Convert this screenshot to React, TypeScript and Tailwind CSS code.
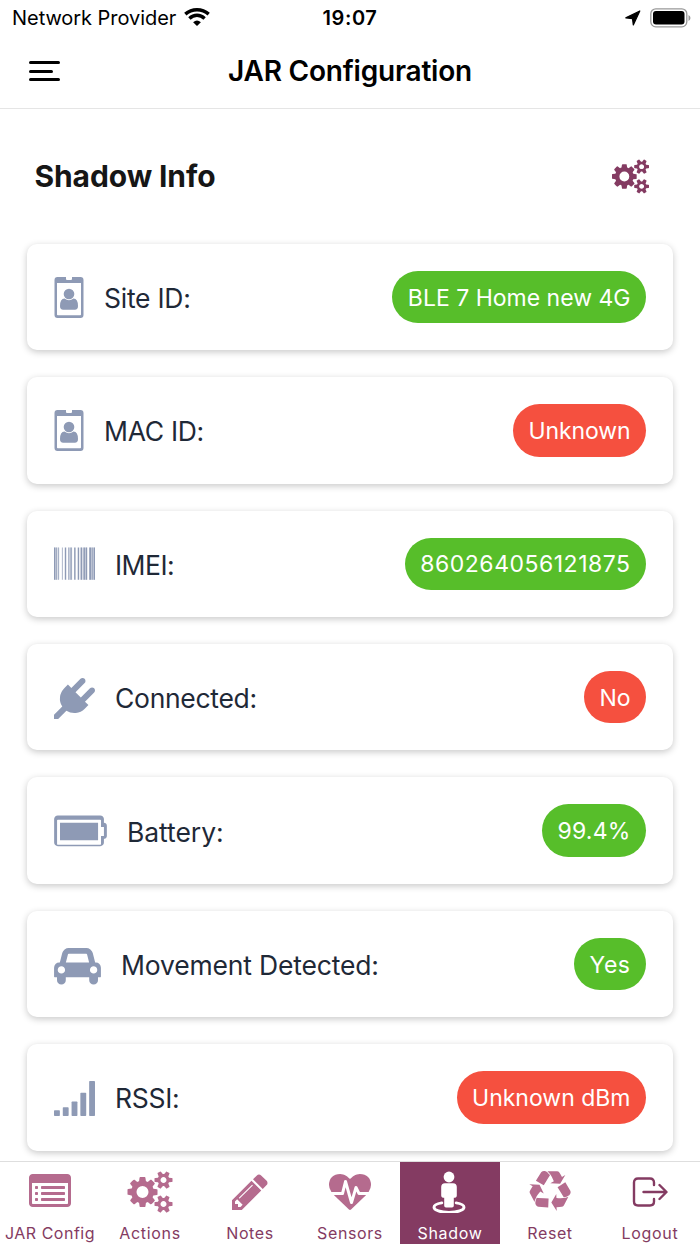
import React from "react";

interface IconProps {
  className?: string;
}

interface ShadowItem {
  label: string;
  value: string;
  ok: boolean;
  icon: React.ReactNode;
  labelClass: string;
  valueClass: string;
}

interface TabItem {
  label: string;
  icon: React.ReactNode;
  active?: boolean;
  labelClass: string;
}

const CogsIcon: React.FC<IconProps> = ({ className }) => (
  <svg className={className} viewBox="0 0 1920 1792" fill="currentColor">
    <path d="M896 896q0-106-75-181t-181-75-181 75-75 181 75 181 181 75 181-75 75-181zm768 512q0-52-38-90t-90-38-90 38-38 90q0 53 37.500 90.500t90.500 37.500 90.500-37.500 37.500-90.500zm0-1024q0-52-38-90t-90-38-90 38-38 90q0 53 37.500 90.500t90.500 37.500 90.500-37.500 37.500-90.500zm-384 421v185q0 10-7 19.500t-16 10.500l-155 24q-11 35-32 76 34 48 90 115 7 11 7 20 0 12-7 19-23 30-82.500 89.500t-78.500 59.500q-11 0-21-7l-115-90q-37 19-77 31-11 108-23 155-7 24-30 24h-186q-11 0-20-7.500t-10-17.500l-23-153q-34-10-75-31l-118 89q-7 7-20 7-11 0-21-8-144-133-144-160 0-9 7-19 10-14 41-53t47-61q-23-44-35-82l-152-24q-10-1-17-9.500t-7-19.500v-185q0-10 7-19.500t16-10.500l155-24q11-35 32-76-34-48-90-115-7-11-7-20 0-12 7-20 22-30 82-89t79-59q11 0 21 7l115 90q34-18 77-32 11-108 23-154 7-24 30-24h186q11 0 20 7.500t10 17.500l23 153q34 10 75 31l118-89q8-7 20-7 11 0 21 8 144 133 144 160 0 8-7 19-12 16-42 54t-45 60q23 48 34 82l152 23q10 2 17 10.500t7 19.500zm640 533v140q0 16-149 31-12 27-30 52 51 113 51 138 0 4-4 7-122 71-124 71-8 0-46-47t-52-68q-20 2-30 2t-30-2q-14 21-52 68t-46 47q-2 0-124-71-4-3-4-7 0-25 51-138-18-25-30-52-149-15-149-31v-140q0-16 149-31 13-29 30-52-51-113-51-138 0-4 4-7 4-2 35-20t59-34 30-16q8 0 46 46.500t52 67.500q20-2 30-2t30 2q51-71 92-112l6-2q4 0 124 70 4 3 4 7 0 25-51 138 17 23 30 52 149 15 149 31zm0-1024v140q0 16-149 31-12 27-30 52 51 113 51 138 0 4-4 7-122 71-124 71-8 0-46-47t-52-68q-20 2-30 2t-30-2q-14 21-52 68t-46 47q-2 0-124-71-4-3-4-7 0-25 51-138-18-25-30-52-149-15-149-31v-140q0-16 149-31 13-29 30-52-51-113-51-138 0-4 4-7 4-2 35-20t59-34 30-16q8 0 46 46.500t52 67.500q20-2 30-2t30 2q51-71 92-112l6-2q4 0 124 70 4 3 4 7 0 25-51 138 17 23 30 52 149 15 149 31z" />
  </svg>
);

const BadgeIcon: React.FC = () => (
  <svg className="h-[42px] w-[30px]" viewBox="0 0 30 42" fill="currentColor">
    <path
      fillRule="evenodd"
      d="M3.500 0H12v2q0 1 1 1h4q1 0 1-1V0h8.500q3 0 3 3v35q0 3-3 3h-23q-3 0-3-3V3q0-3 3-3zM3 6v31.500q0 .8.800.8h22.400q.8 0 .8-.8V6z"
    />
    <circle cx="15" cy="17" r="5.300" />
    <path d="M10.500 21.500q4.500 3.500 9 0 4.500.3 4.500 7.500 0 3.800-3.200 3.800h-11.600q-3.200 0-3.200-3.800 0-7.200 4.500-7.500z" />
  </svg>
);

const BarcodeIcon: React.FC = () => (
  <svg className="h-[41px] w-[41px]" viewBox="0 40 1792 1792" fill="currentColor">
    <path d="M0 192h63v1408H0zM94 192h32v1408H94zM189 192h31v1408h-31zM346 192h31v1408h-31zM472 192h62v1408h-62zM629 192h31v1408h-31zM692 192h31v1408h-31zM755 192h31v1408h-31zM880 192h63v1408h-63zM1037 192h63v1408h-63zM1163 192h63v1408h-63zM1289 192h63v1408h-63zM1383 192h63v1408h-63zM1541 192h94v1408h-94zM1666 192h32v1408h-32zM1729 192h63v1408h-63z" />
    <path
      opacity="0.300"
      d="M0 192h230v1408H0zM620 192h176v1408H620zM1163 192h300v1408h-300zM1541 192h251v1408h-251z"
    />
  </svg>
);

const PlugIcon: React.FC = () => (
  <svg className="h-[41px] w-[41px]" viewBox="0 0 1792 1792" fill="currentColor">
    <path d="M1755 453q37 38 37 90.500t-37 90.500l-401 400 150 150-160 160q-163 163-389.500 186.500t-411.500-100.500l-362 362h-181v-181l362-362q-124-185-100.500-411.500t186.500-389.500l160-160 150 150 400-401q38-37 91-37t90 37 37 90.500-37 90.500l-400 401 234 234 401-400q38-37 91-37t90 37z" />
  </svg>
);

const BatteryIcon: React.FC = () => (
  <svg className="h-[41px] w-[53px]" viewBox="0 0 2304 1792" fill="currentColor">
    <path d="M1920 512v768h-1664v-768h1664zm128 576h128v-384h-128v-288q0-14-9-23t-23-9h-1856q-14 0-23 9t-9 23v1024q0 14 9 23t23 9h1856q14 0 23-9t9-23v-288zm256-384v384q0 53-37.500 90.500t-90.500 37.500v160q0 66-47 113t-113 47h-1856q-66 0-113-47t-47-113v-1024q0-66 47-113t113-47h1856q66 0 113 47t47 113v160q53 0 90.500 37.500t37.500 90.500z" />
  </svg>
);

const CarIcon: React.FC = () => (
  <svg className="h-[41px] w-[47px]" viewBox="0 0 2048 1792" fill="currentColor">
    <path d="M480 1088q0-66-47-113t-113-47-113 47-47 113 47 113 113 47 113-47 47-113zm36-320h1016l-89-357q-2-8-14-17.500t-21-9.500h-768q-9 0-21 9.500t-14 17.500zm1372 320q0-66-47-113t-113-47-113 47-47 113 47 113 113 47 113-47 47-113zm160-96v384q0 14-9 23t-23 9h-96v128q0 80-56 136t-136 56-136-56-56-136v-128h-1024v128q0 80-56 136t-136 56-136-56-56-136v-128h-96q-14 0-23-9t-9-23v-384q0-93 65.500-158.500t158.500-65.500h28l105-419q23-94 104-157.500t179-63.500h768q98 0 179 63.500t104 157.500l105 419h28q93 0 158.500 65.500t65.500 158.500z" />
  </svg>
);

const SignalIcon: React.FC = () => (
  <svg className="h-[41px] w-[41px]" viewBox="0 0 1792 1792" fill="currentColor">
    <rect x="0" y="1408" width="256" height="256" rx="32" />
    <rect x="384" y="1280" width="256" height="384" rx="32" />
    <rect x="768" y="1024" width="256" height="640" rx="32" />
    <rect x="1152" y="640" width="256" height="1024" rx="32" />
    <rect x="1536" y="128" width="256" height="1536" rx="32" />
  </svg>
);

const ListIcon: React.FC = () => (
  <svg className="h-[42px] w-[42px]" viewBox="0 0 1792 1792" fill="currentColor">
    <path
      fillRule="evenodd"
      d="M160 128h1472q66 0 113 47t47 113v1088q0 66-47 113t-113 47H160q-66 0-113-47T0 1376V288q0-66 47-113t113-47zM128 512v864q0 32 32 32h1472q32 0 32-32V512z"
    />
    {[640, 896, 1152].map((y) => (
      <g key={y}>
        <rect x="256" y={y} width="128" height="128" rx="32" />
        <rect x="512" y={y} width="1024" height="128" rx="32" />
      </g>
    ))}
  </svg>
);

const PencilIcon: React.FC = () => (
  <svg className="h-[42px] w-[42px]" viewBox="0 0 1792 1792" fill="currentColor">
    <path d="M491 1536l91-91-235-235-91 91v107h128v128h107zm523-928q0-22-22-22-10 0-17 7l-542 542q-7 7-7 17 0 22 22 22 10 0 17-7l542-542q7-7 7-17zm-54-192l416 416-832 832h-416v-416zm683 96q0 53-37 90l-166 166-416-416 166-165q36-38 90-38 53 0 91 38l235 234q37 39 37 91z" />
  </svg>
);

const HeartbeatIcon: React.FC = () => (
  <svg className="h-[42px] w-[42px]" viewBox="0 0 1792 1792" fill="currentColor">
    <path d="M1280 1024h305q-5 6-10 10.500t-9 7.500l-3 4-623 600q-18 18-44 18t-44-18l-624-602q-5-2-21-20h369q22 0 39.500-13.500t22.500-34.500l70-281 190 667q6 20 23 33t39 13q21 0 38-13t23-33l146-485 56 112q18 35 57 35zm512-428q0 145-103 300h-369l-111-221q-8-17-25.500-27t-36.500-8q-45 5-56 46l-129 430-196-686q-6-20-23.500-33t-39.500-13-39 13.500-22 34.500l-116 464h-423q-103-155-103-300 0-220 127-344t351-124q62 0 126.500 21.500t120 58 95.500 68.500 76 68q36-36 76-68t95.500-68.500 120-58 126.500-21.500q224 0 351 124t127 344z" />
  </svg>
);

const StreetViewIcon: React.FC = () => (
  <svg className="mr-[3px] h-[42px] w-[34px]" viewBox="0 0 34 42" fill="currentColor">
    <circle cx="17" cy="6" r="5.400" />
    <path d="M13 12.200h8q3.800 0 3.800 3.800v8.500q0 2.300-3 2.300v8q0 1.800-1.800 1.800h-6q-1.800 0-1.800-1.800v-8q-3 0-3-2.300V16q0-3.800 3.800-3.800z" />
    <path
      d="M9.800 31.900C5 32.700 2 34.200 2 36.200c0 3 6.800 5.200 15 5.200s15-2.200 15-5.200c0-2-3-3.500-7.800-4.300"
      fill="none"
      stroke="currentColor"
      strokeWidth="2.900"
      strokeLinecap="round"
    />
  </svg>
);

const RecycleIcon: React.FC = () => (
  <svg className="h-[42px] w-[42px]" viewBox="0 0 1792 1792" fill="currentColor">
    <path d="M836 1169l-15 368-2 22-420-29q-36-3-67-31.500t-47-65.500q-11-27-14.500-55t4-65 12-55 21.500-64 19-53q78 12 509 28zm-387-586l180 379-147-92q-63 72-111.500 144.500t-72.500 125-39.500 94.500-18.500 63l-4 21-190-357q-17-26-18-56t6-47l8-18q35-63 114-188l-140-86zm1231 517l-188 359q-12 29-36.500 46.500t-43.500 20.500l-18 4q-71 7-219 12l8 164-230-367 211-362 7 173q170 16 283 5t170-33zm-785-924q-47 63-265 435l-317-187-19-12 225-356q20-31 60-45t80-10q24 2 48.500 12t42 21 41.500 33 36 34.500 36 39.500 32 35zm655 307l212 363q18 37 12.500 76t-27.500 74q-13 20-33 37t-38 28-48.500 22-47 16-51.500 14-46 12q-34-72-265-436l313-195zm-143-226l142-83-220 373-419-20 151-86q-34-89-75-166t-75.500-123.500-64.500-80-47-46.500l-17-13 405 1q31-3 58 10.500t39 28.500l11 15q39 61 112 190z" />
  </svg>
);

const LogoutIcon: React.FC = () => (
  <svg
    className="h-[42px] w-[36px]"
    viewBox="0 0 36 42"
    fill="none"
    stroke="currentColor"
    strokeWidth="2.400"
    strokeLinecap="round"
    strokeLinejoin="round"
  >
    <path d="M22 14V11.500q0-4-4-4H6q-4 0-4 4v19q0 4 4 4h12q4 0 4-4V28M11.500 21H34M27.500 14l7 7-7 7" />
  </svg>
);

const WifiIcon: React.FC = () => (
  <svg className="-mt-[2px] h-[18px] w-[26px]" viewBox="0 0 26 18" fill="none" stroke="black" strokeWidth="3.400">
    <path d="M1.300 6.100Q6.300 1.700 13 1.700T24.700 6.100" />
    <path d="M5.400 10.400Q8.700 7.300 13 7.300T20.600 10.400" />
    <path d="M9.100 14.200Q13 10.900 16.900 14.200L13 18z" fill="black" stroke="none" />
  </svg>
);

const items: ShadowItem[] = [
  { label: "Site ID:", value: "BLE 7 Home new 4G", ok: true, icon: <BadgeIcon />, labelClass: "tracking-[-0.25px]", valueClass: "tracking-[0px]" },
  { label: "MAC ID:", value: "Unknown", ok: false, icon: <BadgeIcon />, labelClass: "tracking-[-0.3px]", valueClass: "tracking-[-0.1px]" },
  { label: "IMEI:", value: "860264056121875", ok: true, icon: <BarcodeIcon />, labelClass: "tracking-[-0.5px]", valueClass: "tracking-[0.5px]" },
  { label: "Connected:", value: "No", ok: false, icon: <PlugIcon />, labelClass: "tracking-[-0.3px]", valueClass: "tracking-[0px]" },
  { label: "Battery:", value: "99.4%", ok: true, icon: <BatteryIcon />, labelClass: "tracking-[-0.050px]", valueClass: "tracking-[0.2px]" },
  { label: "Movement Detected:", value: "Yes", ok: true, icon: <CarIcon />, labelClass: "tracking-[-0.17px]", valueClass: "tracking-[0.5px]" },
  { label: "RSSI:", value: "Unknown dBm", ok: false, icon: <SignalIcon />, labelClass: "tracking-[-0.3px]", valueClass: "tracking-[0px]" },
];

const tabs: TabItem[] = [
  { label: "JAR Config", icon: <ListIcon />, labelClass: "tracking-[0.5px]" },
  { label: "Actions", icon: <CogsIcon className="h-[42px] w-[46px]" />, labelClass: "tracking-[0.7px]" },
  { label: "Notes", icon: <PencilIcon />, labelClass: "tracking-[0.6px]" },
  { label: "Sensors", icon: <HeartbeatIcon />, labelClass: "tracking-[0.6px]" },
  { label: "Shadow", icon: <StreetViewIcon />, active: true, labelClass: "tracking-[0.7px]" },
  { label: "Reset", icon: <RecycleIcon />, labelClass: "tracking-[0.6px]" },
  { label: "Logout", icon: <span className="text-[#843b62]"><LogoutIcon /></span>, labelClass: "tracking-[0.7px]" },
];

const StatusBar: React.FC = () => (
  <div className="grid h-9 grid-cols-3 items-center pl-3 pr-[9px] text-[20px] leading-9 text-black">
    <div className="flex items-center gap-2 whitespace-nowrap">
      <span className="tracking-[-0.050px]">Network Provider</span>
      <WifiIcon />
    </div>
    <div className="pr-[3px] text-center font-semibold tracking-[0.6px]">19:07</div>
    <div className="flex items-center justify-end gap-[9px]">
      <svg className="h-4 w-4" viewBox="0 0 16 16" fill="black" stroke="black" strokeLinejoin="round">
        <path d="M.8 7.800L14.800 1 8.300 15 7.500 8.600z" strokeWidth="1.200" />
      </svg>
      <svg className="-mt-px h-5 w-[41px]" viewBox="0 0 41 20">
        <rect x="0.800" y="0.800" width="36" height="18" rx="5" fill="none" stroke="#999" strokeWidth="1.300" />
        <rect x="3" y="3" width="31.500" height="13.500" rx="3" fill="black" />
        <path d="M38.500 7q2 1 2 3t-2 3z" fill="#999" />
      </svg>
    </div>
  </div>
);

const ShadowCard: React.FC<{ item: ShadowItem }> = ({ item }) => (
  <div className="flex h-[106.400px] shrink-0 items-center rounded-[10px] bg-white px-[27px] shadow-[0_2px_7px_rgba(0,0,0,0.22)]">
    <span className="mr-[20px] mt-[2px] text-[#8e9ab5]">{item.icon}</span>
    <span className={`mt-[2px] text-[26.500px] leading-8 text-[#1f2937] ${item.labelClass}`}>{item.label}</span>
    <span
      className={`ml-auto flex h-[52.400px] items-center rounded-full px-[15.500px] pt-[1.500px] text-[23px] text-white ${item.valueClass} ${
        item.ok ? "bg-[#57be2a]" : "bg-[#f5503f]"
      }`}
    >
      {item.value}
    </span>
  </div>
);

export default function App() {
  return (
    <div className="flex h-[1244px] w-[700px] flex-col overflow-hidden bg-white font-['Inter',sans-serif]">
      <StatusBar />

      <header className="grid h-[73px] grid-cols-[1fr_auto_1fr] items-center border-b border-[#e5e5e5] px-[29px]">
        <button type="button" aria-label="Menu" className="mb-[2px] flex flex-col gap-[5.500px]">
          <span className="h-[3px] w-[31px] rounded-full bg-black" />
          <span className="h-[3px] w-6 rounded-full bg-black" />
          <span className="h-[3px] w-[31px] rounded-full bg-black" />
        </button>
        <h1 className="mb-[2px] text-[28px] font-semibold tracking-[-0.22px] text-black">JAR Configuration</h1>
      </header>

      <main className="flex min-h-0 flex-1 flex-col overflow-hidden px-[27px]">
        <div className="flex h-[134.900px] shrink-0 items-center justify-between pl-[7.500px] pr-6">
          <h2 className="text-[30px] font-bold tracking-[-0.1px] text-[#161616]">Shadow Info</h2>
          <CogsIcon className="h-[35px] w-[37px] text-[#843b62]" />
        </div>
        <div className="flex flex-col gap-[27px]">
          {items.map((item) => (
            <ShadowCard key={item.label} item={item} />
          ))}
        </div>
      </main>

      <nav className="grid h-[83px] shrink-0 grid-cols-7 border-t border-[#dedede] bg-white">
        {tabs.map((tab) => (
          <button
            key={tab.label}
            type="button"
            className={`flex flex-col items-center pt-[9px] ${
              tab.active ? "bg-[#843b62] text-white" : "text-[#b56b8e]"
            }`}
          >
            {tab.icon}
            <span
              className={`mt-[8px] whitespace-nowrap text-[16px] leading-6 ${tab.labelClass} ${
                tab.active ? "text-white" : "text-[#843b62]"
              }`}
            >
              {tab.label}
            </span>
          </button>
        ))}
      </nav>
    </div>
  );
}
